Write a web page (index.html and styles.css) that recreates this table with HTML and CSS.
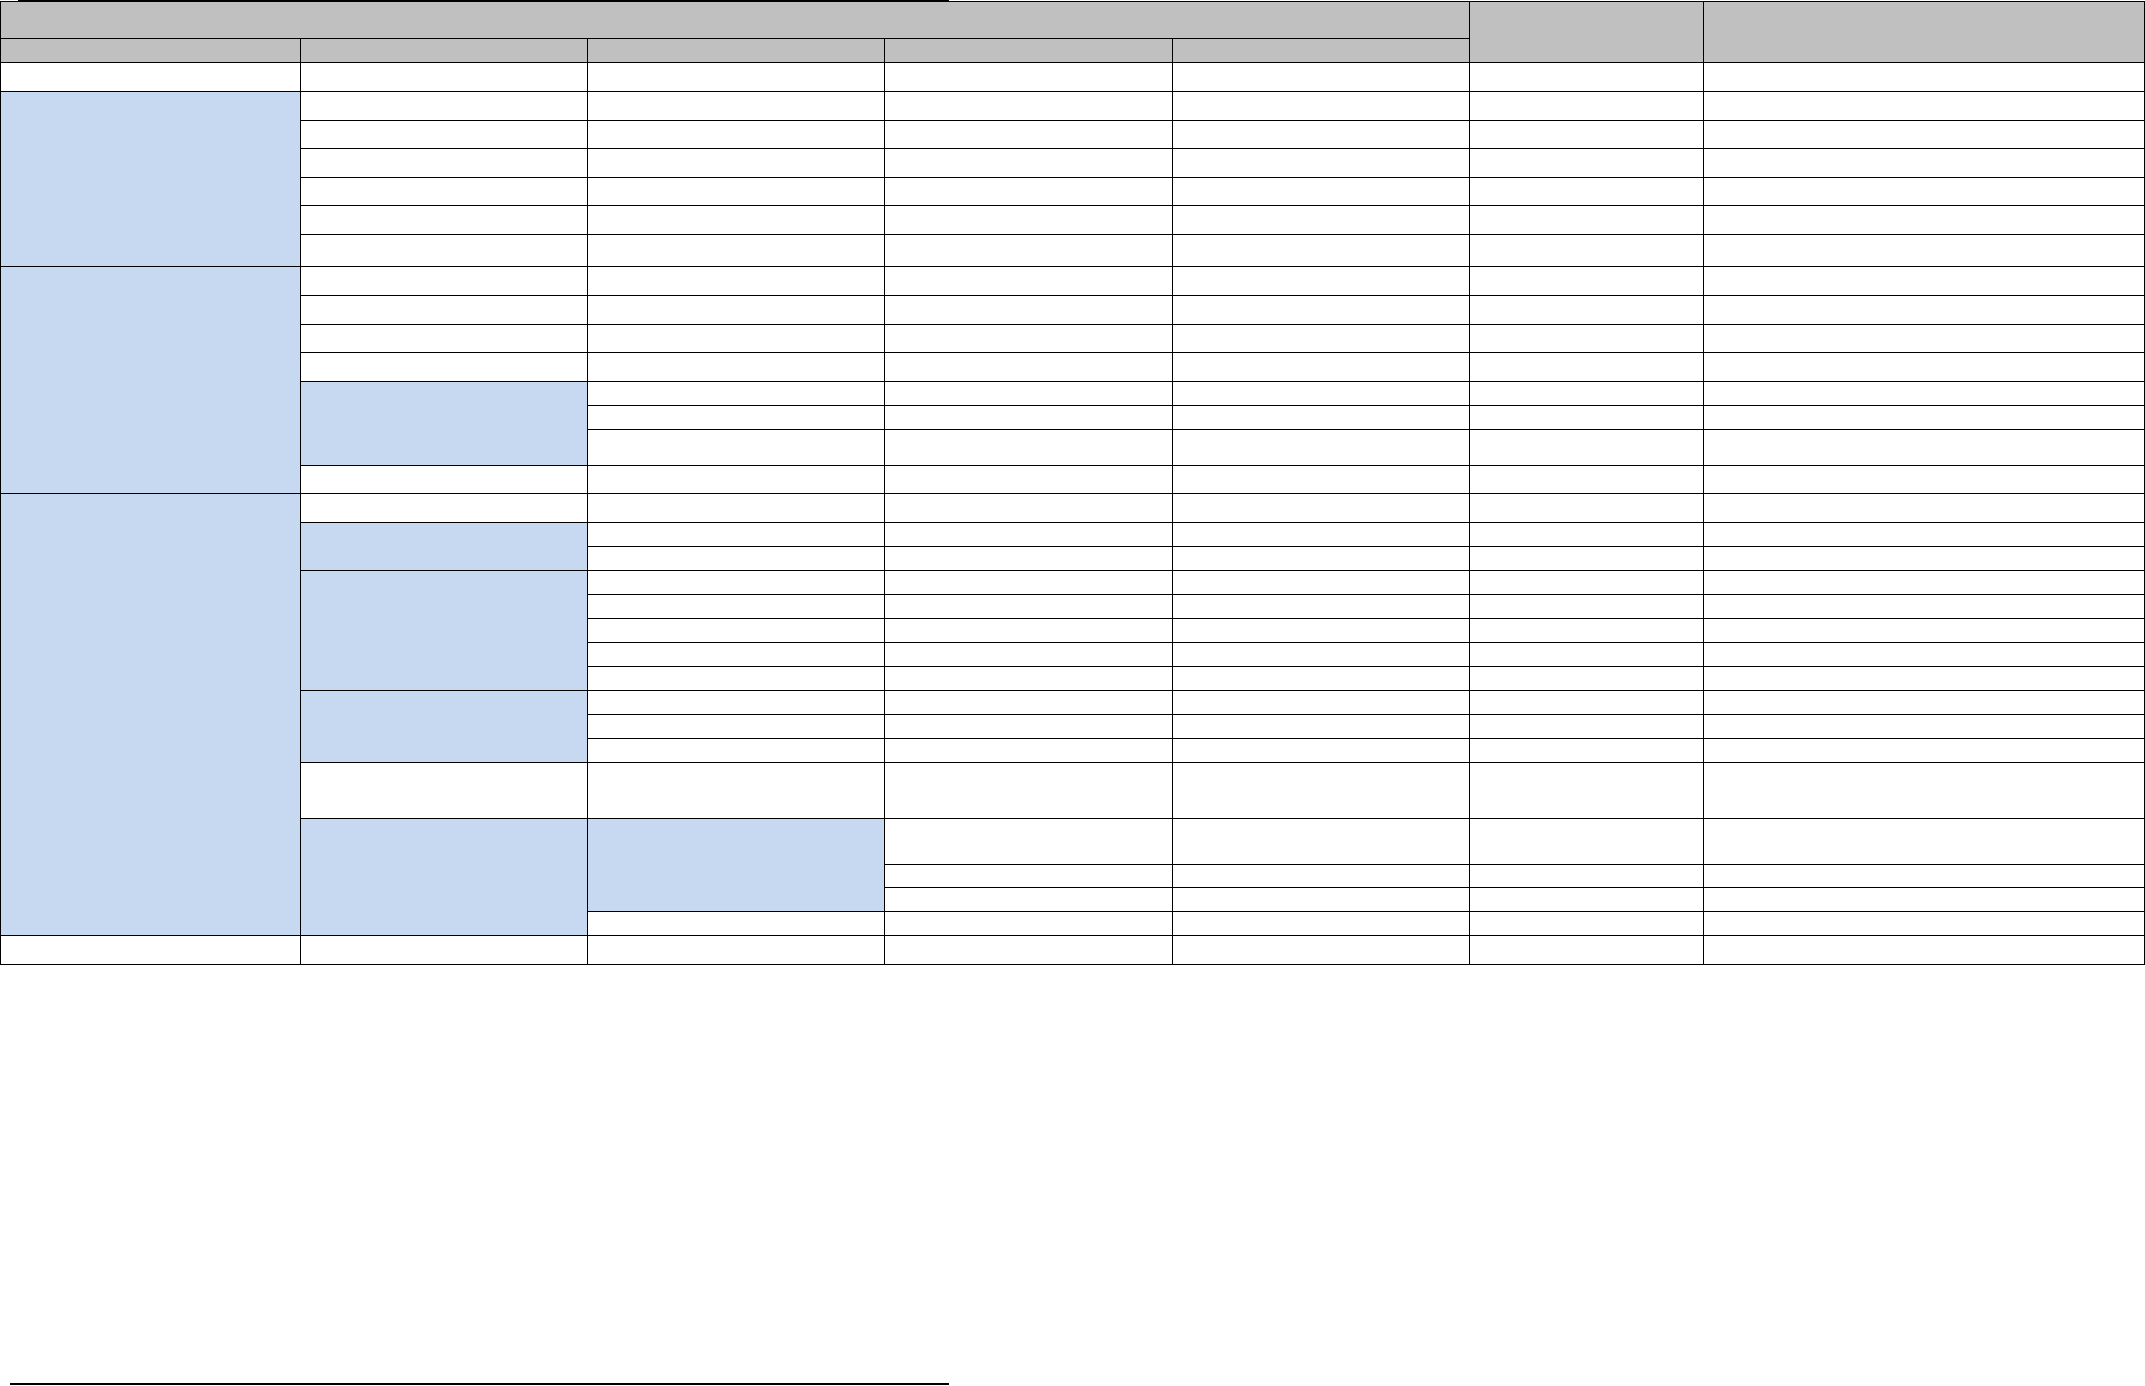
FILE: index.html
```html
<!DOCTYPE html>
<html lang="en">
<head>
<meta charset="utf-8">
<title>Table</title>
<link rel="stylesheet" href="styles.css">
</head>
<body>
<div class="page">
  <div class="rule-top"></div>
  <table class="grid">
    <colgroup>
      <col class="w1"><col class="w2"><col class="w3"><col class="w4"><col class="w5"><col class="w6"><col class="w7">
    </colgroup>
    <tr class="h37"><td class="hd" colspan="5"></td><td class="hd" rowspan="2"></td><td class="hd" rowspan="2"></td></tr>
    <tr class="h24"><td class="hd"></td><td class="hd"></td><td class="hd"></td><td class="hd"></td><td class="hd"></td></tr>
    <tr class="h29"><td></td><td></td><td></td><td></td><td></td><td></td><td></td></tr>

    <tr class="h29"><td class="bl" rowspan="6"></td><td></td><td></td><td></td><td></td><td></td><td></td></tr>
    <tr class="h28"><td></td><td></td><td></td><td></td><td></td><td></td></tr>
    <tr class="h29"><td></td><td></td><td></td><td></td><td></td><td></td></tr>
    <tr class="h28"><td></td><td></td><td></td><td></td><td></td><td></td></tr>
    <tr class="h29"><td></td><td></td><td></td><td></td><td></td><td></td></tr>
    <tr class="h32"><td></td><td></td><td></td><td></td><td></td><td></td></tr>

    <tr class="h29"><td class="bl" rowspan="8"></td><td></td><td></td><td></td><td></td><td></td><td></td></tr>
    <tr class="h29"><td></td><td></td><td></td><td></td><td></td><td></td></tr>
    <tr class="h28"><td></td><td></td><td></td><td></td><td></td><td></td></tr>
    <tr class="h29"><td></td><td></td><td></td><td></td><td></td><td></td></tr>
    <tr class="h24"><td class="bl" rowspan="3"></td><td></td><td></td><td></td><td></td><td></td></tr>
    <tr class="h24"><td></td><td></td><td></td><td></td><td></td></tr>
    <tr class="h36"><td></td><td></td><td></td><td></td><td></td></tr>
    <tr class="h28"><td></td><td></td><td></td><td></td><td></td><td></td></tr>

    <tr class="h29"><td class="bl" rowspan="16"></td><td></td><td></td><td></td><td></td><td></td><td></td></tr>
    <tr class="h24"><td class="bl" rowspan="2"></td><td></td><td></td><td></td><td></td><td></td></tr>
    <tr class="h24"><td></td><td></td><td></td><td></td><td></td></tr>
    <tr class="h24"><td class="bl" rowspan="5"></td><td></td><td></td><td></td><td></td><td></td></tr>
    <tr class="h24"><td></td><td></td><td></td><td></td><td></td></tr>
    <tr class="h24"><td></td><td></td><td></td><td></td><td></td></tr>
    <tr class="h24"><td></td><td></td><td></td><td></td><td></td></tr>
    <tr class="h24"><td></td><td></td><td></td><td></td><td></td></tr>
    <tr class="h24"><td class="bl" rowspan="3"></td><td></td><td></td><td></td><td></td><td></td></tr>
    <tr class="h24"><td></td><td></td><td></td><td></td><td></td></tr>
    <tr class="h24"><td></td><td></td><td></td><td></td><td></td></tr>
    <tr class="h56"><td></td><td></td><td></td><td></td><td></td><td></td></tr>
    <tr class="h46"><td class="bl" rowspan="4"></td><td class="bl" rowspan="3"></td><td></td><td></td><td></td><td></td></tr>
    <tr class="h23"><td></td><td></td><td></td><td></td></tr>
    <tr class="h24"><td></td><td></td><td></td><td></td></tr>
    <tr class="h24"><td></td><td></td><td></td><td></td><td></td></tr>

    <tr class="h29"><td></td><td></td><td></td><td></td><td></td><td></td><td></td></tr>
  </table>
  <div class="rule-bottom"></div>
</div>
</body>
</html>
```

FILE: styles.css
```css
html, body {
  margin: 0;
  padding: 0;
  background: #ffffff;
  font-family: "Liberation Sans", Arial, sans-serif;
}

.page {
  position: relative;
  width: 2145px;
  height: 1386px;
  padding-top: 1px;
  box-sizing: border-box;
}

.rule-top {
  position: absolute;
  left: 18px;
  top: 0;
  width: 931px;
  height: 2px;
  background: #000000;
  z-index: 2;
}

.grid {
  border-collapse: collapse;
  table-layout: fixed;
  width: 2144px;
}

.grid td {
  border: 1px solid #000000;
  padding: 0;
  background: #ffffff;
}

.grid td.hd { background: #c0c0c0; }
.grid td.bl { background: #c6d9f1; }

.w1 { width: 300px; }
.w2 { width: 287px; }
.w3 { width: 297px; }
.w4 { width: 288px; }
.w5 { width: 297px; }
.w6 { width: 234px; }
.w7 { width: 441px; }

.h23 { height: 23px; }
.h24 { height: 24px; }
.h28 { height: 28px; }
.h29 { height: 29px; }
.h32 { height: 32px; }
.h36 { height: 36px; }
.h37 { height: 37px; }
.h46 { height: 46px; }
.h56 { height: 56px; }

.rule-bottom {
  margin: 418px 0 0 10px;
  width: 939px;
  height: 2px;
  background: #000000;
}
```
